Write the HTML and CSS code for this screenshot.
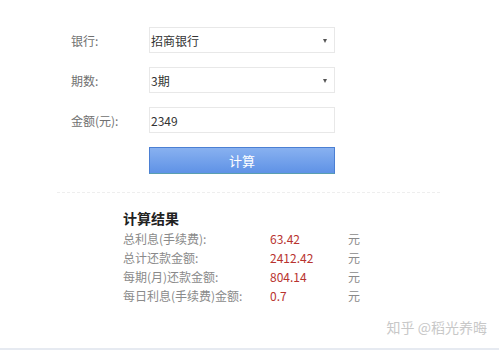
FILE: index.html
```html
<!DOCTYPE html>
<html lang="zh-CN">
<head>
    <meta charset="UTF-8">
    <title>计算器</title>
    <link rel="stylesheet" href="styles.css">
</head>
<body>
    <div class="calc">
        <div class="row">
            <label class="label">银行:</label>
            <div class="select">招商银行<span class="arrow"></span></div>
        </div>
        <div class="row">
            <label class="label">期数:</label>
            <div class="select">3期<span class="arrow"></span></div>
        </div>
        <div class="row">
            <label class="label">金额(元):</label>
            <div class="input">2349</div>
        </div>
        <div class="row">
            <span class="label"></span>
            <button class="btn">计算</button>
        </div>
    </div>

    <div class="divider"></div>

    <div class="result">
        <h3>计算结果</h3>
        <div class="line"><span class="name">总利息(手续费):</span><span class="val">63.42</span><span class="unit">元</span></div>
        <div class="line"><span class="name">总计还款金额:</span><span class="val">2412.42</span><span class="unit">元</span></div>
        <div class="line"><span class="name">每期(月)还款金额:</span><span class="val">804.14</span><span class="unit">元</span></div>
        <div class="line"><span class="name">每日利息(手续费)金额:</span><span class="val">0.7</span><span class="unit">元</span></div>
    </div>

    <div class="mark">知乎 @稻光养晦</div>
    <div class="bottom"></div>
</body>
</html>
```

FILE: styles.css
```css
body {
    margin: 0;
    width: 499px;
    height: 350px;
    background: #fff;
    font-family: "Noto Sans CJK SC", "Liberation Sans", sans-serif;
    position: relative;
    overflow: hidden;
}
.calc {
    padding-top: 27px;
    display: flex;
    flex-direction: column;
    gap: 14px;
}
.row {
    display: flex;
    align-items: center;
}
.label {
    width: 78px;
    margin-left: 71px;
    font-size: 12px;
    color: #707070;
}
.select, .input {
    box-sizing: border-box;
    width: 186px;
    height: 26px;
    border: 1px solid #e8e8e8;
    display: flex;
    align-items: center;
    padding-left: 1px;
    font-size: 12px;
    color: #333;
    position: relative;
}
.arrow {
    position: absolute;
    right: 7px;
    top: 11px;
    border-left: 2px solid transparent;
    border-right: 2px solid transparent;
    border-top: 4px solid #555;
}
.btn {
    box-sizing: border-box;
    width: 186px;
    height: 27px;
    border: 1px solid #4b7fd3;
    border-bottom-color: #5a9fb0;
    background: linear-gradient(#88b1f0, #5f92e6);
    color: #fff;
    font-size: 13px;
    font-family: inherit;
    padding: 0;
}
.divider {
    margin: 18px 0 0 57px;
    width: 383px;
    border-top: 1px dashed #eeeeee;
}
.result {
    margin-left: 123px;
    padding-top: 15px;
}
.result h3 {
    margin: 0 0 1px;
    font-size: 14px;
    font-weight: bold;
    color: #222;
}
.line {
    display: flex;
    height: 19px;
    align-items: center;
    font-size: 12px;
}
.name {
    width: 147px;
    color: #8a8a8a;
}
.val {
    width: 78px;
    color: #b8332f;
}
.unit {
    color: #8a8a8a;
}
.mark {
    position: absolute;
    right: 12px;
    top: 317px;
    font-size: 14px;
    color: #c8c8c8;
}
.bottom {
    position: absolute;
    left: 0;
    right: 0;
    bottom: 0;
    height: 2px;
    background: #e6eaf1;
}
```
